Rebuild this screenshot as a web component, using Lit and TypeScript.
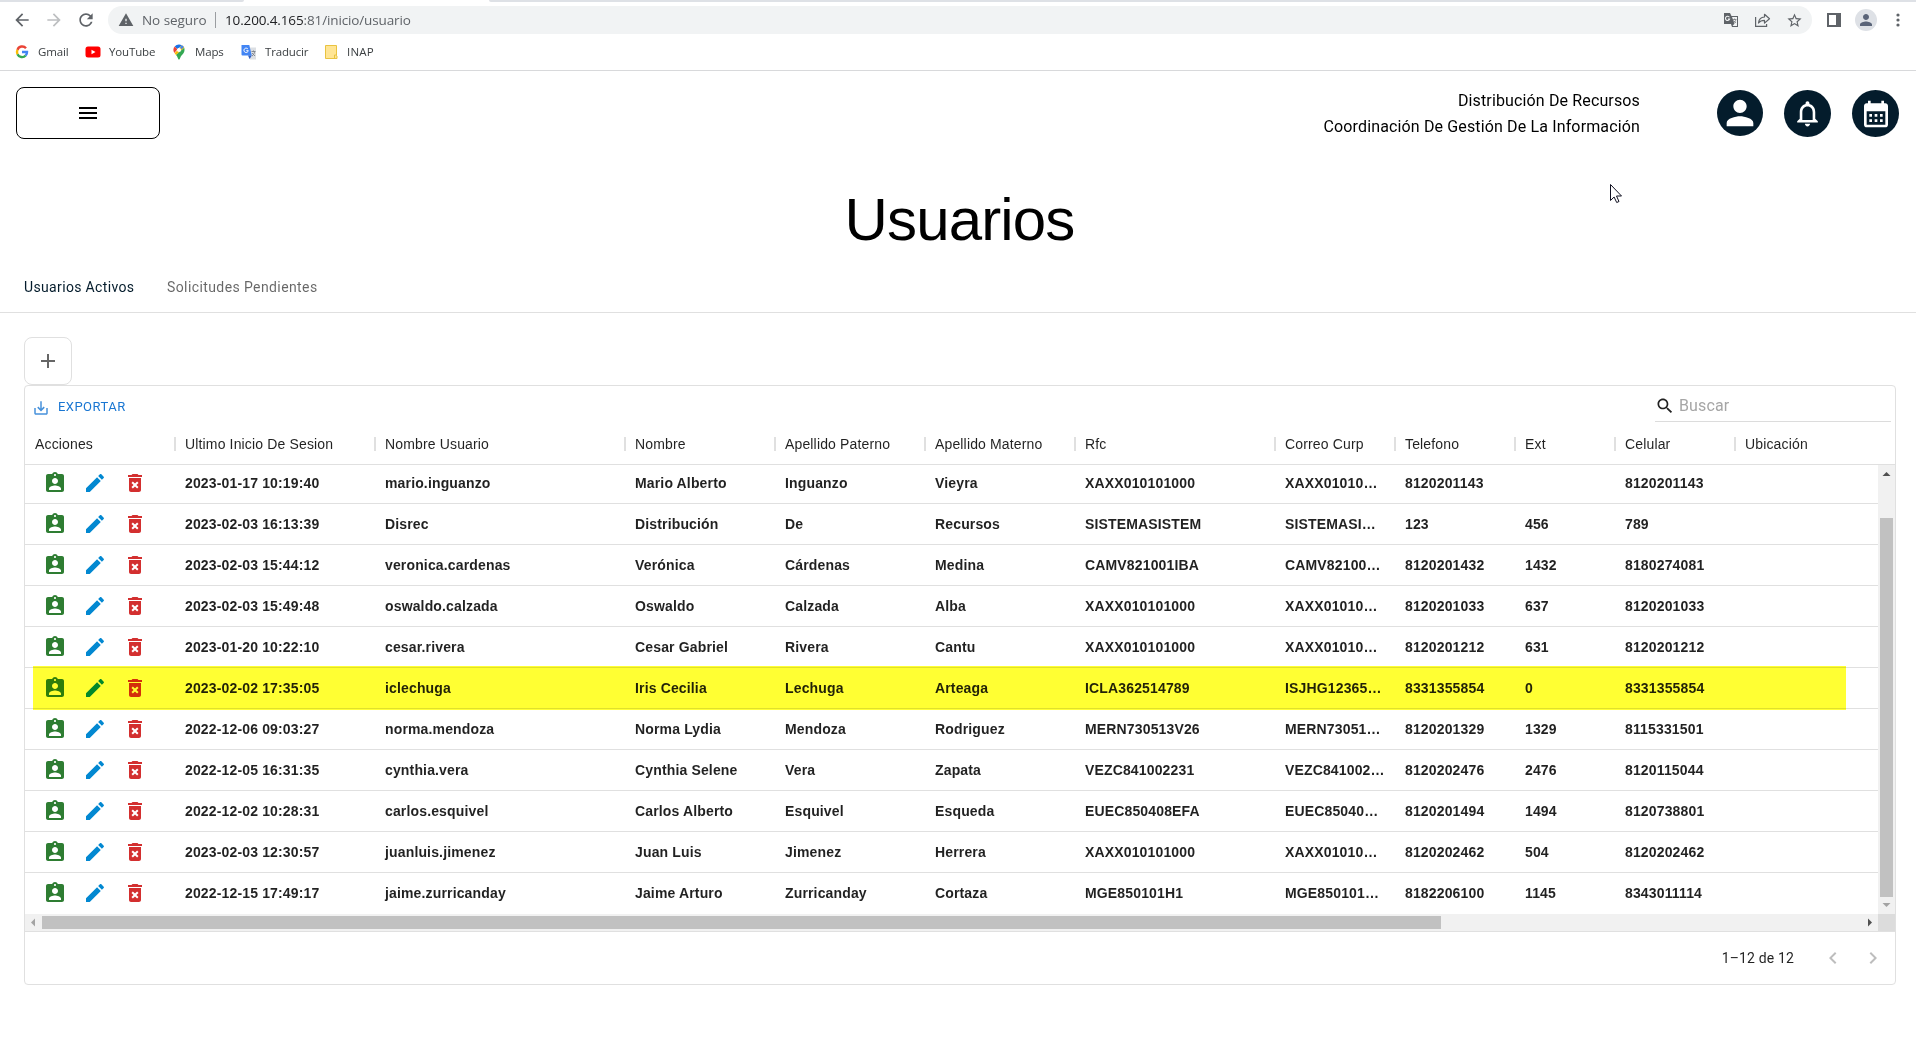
import { LitElement, html, svg, css, nothing } from "lit";
import { customElement } from "lit/decorators.js";

interface User {
  last: string;
  user: string;
  name: string;
  father: string;
  mother: string;
  rfc: string;
  curp: string;
  phone: string;
  ext: string;
  cell: string;
  marked?: boolean;
}

const row = (...v: string[]): User => ({
  last: v[0], user: v[1], name: v[2], father: v[3], mother: v[4],
  rfc: v[5], curp: v[6], phone: v[7], ext: v[8], cell: v[9],
});

const USERS: User[] = [
  row("2023-01-17 10:19:40", "mario.inguanzo", "Mario Alberto", "Inguanzo", "Vieyra", "XAXX010101000", "XAXX01010…", "8120201143", "", "8120201143"),
  row("2023-02-03 16:13:39", "Disrec", "Distribución", "De", "Recursos", "SISTEMASISTEM", "SISTEMASI…", "123", "456", "789"),
  row("2023-02-03 15:44:12", "veronica.cardenas", "Verónica", "Cárdenas", "Medina", "CAMV821001IBA", "CAMV82100…", "8120201432", "1432", "8180274081"),
  row("2023-02-03 15:49:48", "oswaldo.calzada", "Oswaldo", "Calzada", "Alba", "XAXX010101000", "XAXX01010…", "8120201033", "637", "8120201033"),
  row("2023-01-20 10:22:10", "cesar.rivera", "Cesar Gabriel", "Rivera", "Cantu", "XAXX010101000", "XAXX01010…", "8120201212", "631", "8120201212"),
  { ...row("2023-02-02 17:35:05", "iclechuga", "Iris Cecilia", "Lechuga", "Arteaga", "ICLA362514789", "ISJHG12365…", "8331355854", "0", "8331355854"), marked: true },
  row("2022-12-06 09:03:27", "norma.mendoza", "Norma Lydia", "Mendoza", "Rodriguez", "MERN730513V26", "MERN73051…", "8120201329", "1329", "8115331501"),
  row("2022-12-05 16:31:35", "cynthia.vera", "Cynthia Selene", "Vera", "Zapata", "VEZC841002231", "VEZC841002…", "8120202476", "2476", "8120115044"),
  row("2022-12-02 10:28:31", "carlos.esquivel", "Carlos Alberto", "Esquivel", "Esqueda", "EUEC850408EFA", "EUEC85040…", "8120201494", "1494", "8120738801"),
  row("2023-02-03 12:30:57", "juanluis.jimenez", "Juan Luis", "Jimenez", "Herrera", "XAXX010101000", "XAXX01010…", "8120202462", "504", "8120202462"),
  row("2022-12-15 17:49:17", "jaime.zurricanday", "Jaime Arturo", "Zurricanday", "Cortaza", "MGE850101H1", "MGE850101…", "8182206100", "1145", "8343011114"),
];

const HEADERS = [
  "Acciones", "Ultimo Inicio De Sesion", "Nombre Usuario", "Nombre", "Apellido Paterno",
  "Apellido Materno", "Rfc", "Correo Curp", "Telefono", "Ext", "Celular", "Ubicación",
];

const P = {
  back: "M20 11H7.83l5.59-5.59L12 4l-8 8 8 8 1.41-1.41L7.83 13H20v-2z",
  forward: "M12 4l-1.41 1.41L16.17 11H4v2h12.17l-5.58 5.59L12 20l8-8z",
  reload: "M17.65 6.35C16.2 4.9 14.21 4 12 4c-4.42 0-7.99 3.58-7.99 8s3.57 8 7.99 8c3.73 0 6.84-2.55 7.73-6h-2.08c-.82 2.33-3.04 4-5.65 4-3.31 0-6-2.69-6-6s2.69-6 6-6c1.66 0 3.14.69 4.22 1.78L13 11h7V4l-2.35 2.35z",
  warn: "M1 21h22L12 2 1 21zm12-3h-2v-2h2v2zm0-4h-2v-4h2v4z",
  star: "M22 9.24l-7.19-.62L12 2 9.19 8.63 2 9.24l5.46 4.73L5.82 21 12 17.27 18.18 21l-1.63-7.03L22 9.24zM12 15.4l-3.76 2.27 1-4.28-3.32-2.88 4.38-.38L12 6.1l1.71 4.04 4.38.38-3.32 2.88 1 4.28L12 15.4z",
  person: "M12 12c2.21 0 4-1.79 4-4s-1.79-4-4-4-4 1.79-4 4 1.79 4 4 4zm0 2c-2.67 0-8 1.34-8 4v2h16v-2c0-2.66-5.33-4-8-4z",
  menu: "M3 18h18v-2H3v2zm0-5h18v-2H3v2zm0-7v2h18V6H3z",
  bell: "M12 22c1.1 0 2-.9 2-2h-4c0 1.1.9 2 2 2zm6-6v-5c0-3.07-1.63-5.64-4.5-6.32V4c0-.83-.67-1.5-1.5-1.5s-1.5.67-1.5 1.5v.68C7.64 5.36 6 7.92 6 11v5l-2 2v1h16v-1l-2-2zm-2 1H8v-6c0-2.48 1.51-4.5 4-4.5s4 2.02 4 4.5v6z",
  calendar: "M19 4h-1V2h-2v2H8V2H6v2H5c-1.11 0-1.99.9-1.99 2L3 20c0 1.1.89 2 2 2h14c1.1 0 2-.9 2-2V6c0-1.1-.9-2-2-2zm0 16H5V10h14v10zM9 14H7v-2h2v2zm4 0h-2v-2h2v2zm4 0h-2v-2h2v2zm-8 4H7v-2h2v2zm4 0h-2v-2h2v2zm4 0h-2v-2h2v2z",
  plus: "M19 13h-6v6h-2v-6H5v-2h6V5h2v6h6v2z",
  save: "M19 12v7H5v-7H3v7c0 1.1.9 2 2 2h14c1.1 0 2-.9 2-2v-7h-2zm-6 .67l2.59-2.58L17 11.5l-5 5-5-5 1.41-1.41L11 12.67V3h2v9.67z",
  search: "M15.5 14h-.79l-.28-.27C15.41 12.59 16 11.11 16 9.5 16 5.91 13.09 3 9.5 3S3 5.91 3 9.5 5.91 16 9.5 16c1.61 0 3.09-.59 4.23-1.57l.27.28v.79l5 4.99L20.49 19l-4.99-5zm-6 0C7.01 14 5 11.99 5 9.5S7.01 5 9.5 5 14 7.01 14 9.5 11.99 14 9.5 14z",
  badge: "M19 3h-4.18C14.4 1.84 13.3 1 12 1c-1.3 0-2.4.84-2.82 2H5c-1.1 0-2 .9-2 2v14c0 1.1.9 2 2 2h14c1.1 0 2-.9 2-2V5c0-1.1-.9-2-2-2zm-7 0c.55 0 1 .45 1 1s-.45 1-1 1-1-.45-1-1 .45-1 1-1zm0 4c1.66 0 3 1.34 3 3s-1.34 3-3 3-3-1.34-3-3 1.34-3 3-3zm6 12H6v-1.4c0-2 4-3.1 6-3.1s6 1.1 6 3.1V19z",
  edit: "M3 17.25V21h3.75L17.81 9.94l-3.75-3.75L3 17.25zM20.71 7.04c.39-.39.39-1.02 0-1.41l-2.34-2.34c-.39-.39-1.02-.39-1.41 0l-1.83 1.83 3.75 3.75 1.83-1.83z",
  trash: "M6 19c0 1.1.9 2 2 2h8c1.1 0 2-.9 2-2V7H6v12zm2.46-7.12l1.41-1.41L12 12.59l2.12-2.12 1.41 1.41L13.41 14l2.12 2.12-1.41 1.41L12 15.41l-2.12 2.12-1.41-1.41L10.59 14l-2.13-2.12zM15.5 4l-1-1h-5l-1 1H5v2h14V4z",
  left: "M15.41 16.59L10.83 12l4.58-4.59L14 6l-6 6 6 6 1.41-1.41z",
  right: "M8.59 16.59L13.17 12 8.59 7.41 10 6l6 6-6 6-1.41-1.41z",
};

const icon = (d: string, size: number, cls = "") =>
  html`<svg class="ic ${cls}" width=${size} height=${size} viewBox="0 0 24 24">${svg`<path d=${d}></path>`}</svg>`;

@customElement("browser-bar")
export class BrowserBar extends LitElement {
  static styles = css`
    :host { display: block; height: 71px; box-sizing: border-box; border-bottom: 1px solid #d8d9db; background: #fff;
      font-family: "Open Sans", "Noto Sans", sans-serif; color: #3c4043; }
    .ic { display: block; fill: currentColor; flex: none; }
    .strip { height: 2px; display: flex; }
    .strip i { background: #dee1e6; height: 2px; }
    .s1 { width: 244px; border-bottom-right-radius: 2px; }
    .s2 { flex: 1; margin-left: 245px; border-bottom-left-radius: 2px; }
    .tools { display: flex; align-items: center; height: 36px; box-sizing: border-box; padding: 0 11px 0 12px; color: #5f6368; }
    .nav { display: flex; gap: 12px; width: 96px; }
    .off { color: #bdbfc1; }
    .omni { height: 28px; width: 1704px; box-sizing: border-box; border-radius: 14px; background: #f1f3f4; display: flex;
      align-items: center; padding: 0 9px 0 10px; font-size: 13.5px; white-space: nowrap; }
    .sec { width: 73px; margin-left: 8px; letter-spacing: -0.05px; }
    .bar { width: 1px; height: 16px; background: #9a9da1; margin-right: 9px; }
    .url { flex: 1; letter-spacing: -0.13px; }
    .url b { font-weight: 400; color: #202124; }
    .acts { display: flex; align-items: center; }
    .share { margin: 0 13px 0 12px; }
    .sq { display: block; }
    .panel { margin-left: 12px; }
    .ava { width: 22px; height: 22px; border-radius: 50%; background: #dee1e6; color: #5a6478; display: flex;
      align-items: center; justify-content: center; margin-left: 11px; }
    .dots { margin-left: auto; margin-right: 5px; }
    .marks { display: flex; height: 28px; align-items: center; padding-left: 14px; font-size: 11.5px; }
    .m { display: flex; align-items: center; white-space: nowrap; letter-spacing: -0.15px; }
    .m svg { flex: none; margin-right: 8px; }
    .m span { margin-top: -2px; }
    .m1 { width: 70px; }
    .m2 { width: 87px; }
    .m3 { width: 69px; }
    .m4 { width: 83px; }
    .m5 { letter-spacing: 0.2px; }
  `;

  render() {
    return html`
      <div class="strip"><i class="s1"></i><i class="s2"></i></div>
      <div class="tools">
        <div class="nav">${icon(P.back, 20)}${icon(P.forward, 20, "off")}${icon(P.reload, 20)}</div>
        <div class="omni">
          ${icon(P.warn, 16)}
          <span class="sec">No seguro</span><span class="bar"></span>
          <span class="url"><b>10.200.4.165</b>:81/inicio/usuario</span>
          <div class="acts">
            <svg class="sq" width="20" height="20" viewBox="0 0 20 20">
              <path d="M3 3h6l1.500 3H17v11h-6l-1-3H3z" fill="#5f6368"></path>
              <path d="M11 7h5v9h-4.500l2-2.500z" fill="#f1f3f4"></path>
              <path d="M8.400 7.300A2.100 2.100 0 1 0 8.600 9H6.800" fill="none" stroke="#f1f3f4" stroke-width="1.100"></path>
              <path d="M11.800 9.500h3.600M13.600 8.500v1M12.300 13c1.500-.800 2.300-2 2.500-3.500M12.500 10.500l2.400 2.500" fill="none" stroke="#777a7e" stroke-width=".8"></path>
            </svg>
            <svg class="sq share" width="20" height="20" viewBox="0 0 20 20" fill="none" stroke="#5f6368" stroke-width="1.2">
              <path d="M2.600 7v9.400h11V14"></path>
              <path d="M5.500 13c.4-4 3-5.800 6-6V4.300l5 4.400-5 4.400v-2.700c-2.600 0-4.500.6-6 2.600z" stroke-linejoin="round"></path>
            </svg>
            ${icon(P.star, 17)}
          </div>
        </div>
        <svg class="sq panel" width="20" height="20" viewBox="0 0 20 20"><path d="M3 3h14v14H3zM5 5v10h7V5z" fill="#5f6368" fill-rule="evenodd"></path></svg>
        <div class="ava">${icon(P.person, 18)}</div>
        <svg class="dots" width="4" height="16" viewBox="0 0 4 16" fill="#5f6368"><circle cx="2" cy="3" r="1.600"></circle><circle cx="2" cy="8" r="1.600"></circle><circle cx="2" cy="13" r="1.600"></circle></svg>
      </div>
      <div class="marks">
        <div class="m m1"><svg width="16" height="16" viewBox="0 0 16 16" fill="none" stroke-width="2.4">
          <path d="M12 4.200A5 5 0 0 0 3.500 5.800" stroke="#ea4335"></path><path d="M3.500 5.800a5 5 0 0 0 0 4.400" stroke="#fbbc05"></path>
          <path d="M3.500 10.200a5 5 0 0 0 8.200 1.300" stroke="#34a853"></path><path d="M11.700 11.500A5 5 0 0 0 13 8H8" stroke="#4285f4"></path></svg><span>Gmail</span></div>
        <div class="m m2"><svg width="17" height="16" viewBox="0 0 17 16"><rect x="1.500" y="2.500" width="15" height="11" rx="2.500" fill="#f00"></rect><path d="M7.500 5.700v4.600l4-2.300z" fill="#fff"></path></svg><span>YouTube</span></div>
        <div class="m m3"><svg width="16" height="16" viewBox="0 0 16 16">
          <path d="M8 .500a5.500 5.500 0 0 0-4.300 2l2.700 2.700L11 1.400A5.500 5.500 0 0 0 8 .500z" fill="#1a73e8"></path>
          <path d="M3.700 2.500A5.500 5.500 0 0 0 3.400 9l3-3.800z" fill="#ea4335"></path>
          <path d="M10.900 1.300L3.600 9.200 5 11l8.300-7.300a5.400 5.400 0 0 0-2.400-2.400z" fill="#fbbc04"></path>
          <path d="M13.200 3.700L5 10.900c2 2.100 2 4.600 3 4.600s1-2.500 3-4.600c1.700-1.900 2.500-3 2.500-5 0-.800 0-1.500-.3-2.200z" fill="#34a853"></path>
          <path d="M10.900 1.300L9.500 3l-.1 2 1.500-.200 2-1.700a5.400 5.400 0 0 0-2-1.800z" fill="#4285f4"></path>
          <circle cx="8" cy="5.900" r="2" fill="#fff"></circle></svg><span>Maps</span></div>
        <div class="m m4"><svg width="17" height="16" viewBox="0 0 17 16"><path d="M6 3.500h10v12h-6z" fill="#dcdfe3"></path>
          <path d="M1.500 1h7.800l2.500 10.500H2.500a1 1 0 0 1-1-1z" fill="#4285f4"></path><path d="M8 11.500h3.800l-2.200 3.500z" fill="#2f5fc4"></path>
          <path d="M7.900 5A2.200 2.200 0 1 0 8.300 6.700H6.300" stroke="#fff" fill="none"></path><path d="M11.500 7.500h4M13.500 6.500v1M12 12c1.600-1 2.400-2.500 2.600-4.500M12 9l3 3" stroke="#7a8089" fill="none" stroke-width=".9"></path></svg><span>Traducir</span></div>
        <div class="m m5"><svg width="16" height="16" viewBox="0 0 16 16"><path d="M2.500 1.500h11v10l.5.500v2.500h-11.500z" fill="#ffe594" stroke="#e9c340"></path><path d="M11.500 14v-3h2.500" fill="none" stroke="#e9c340"></path></svg><span>INAP</span></div>
      </div>`;
  }
}

@customElement("users-grid")
export class UsersGrid extends LitElement {
  static styles = css`
    :host { display: block; box-sizing: border-box; height: 600px; width: 1872px; border: 1px solid #e0e0e0; border-radius: 4px;
      font-family: "Liberation Sans", Arial, sans-serif; font-size: 14px; letter-spacing: 0.15px; color: rgba(0, 0, 0, 0.87); }
    .ic { display: block; fill: currentColor; flex: none; }
    .tool { height: 38px; display: flex; justify-content: space-between; padding: 0 4px 0 6px; font-family: Roboto, sans-serif; }
    .exp { display: flex; align-items: center; height: 40px; color: #1976d2; font-size: 13px; letter-spacing: 0.46px; gap: 8px; padding-left: 1px; }
    .exp svg { opacity: .8; margin-top: 4px; }
    .find { width: 236px; height: 36px; box-sizing: border-box; border-bottom: 1px solid #dcdcdc; display: flex; align-items: center;
      font-size: 16px; color: #a6a6a6; gap: 4px; padding-top: 4px; }
    .find svg { color: #212121; }
    .cols, .r { display: grid; grid-template-columns: 150px 200px 250px 150px 150px 150px 200px 120px 120px 100px 120px 1fr; align-items: center; }
    .cols { height: 41px; border-bottom: 1px solid #e0e0e0; box-sizing: border-box; }
    .h { padding-left: 10px; display: flex; align-items: center; justify-content: space-between; height: 20px; white-space: nowrap; }
    .h i { width: 2px; height: 14px; background: #e0e0e0; margin-right: -1px; }
    .view { display: grid; grid-template-columns: 1fr 17px; grid-template-rows: 449px 17px; }
    .rows { overflow: hidden; position: relative; }
    .rows .r:first-child { margin-top: -2px; }
    .r { height: 41px; box-sizing: border-box; border-bottom: 1px solid #e0e0e0; font-weight: 700; position: relative; }
    .r:last-child { border-bottom-color: transparent; }
    .c { padding-left: 10px; line-height: 20px; white-space: nowrap; }
    .a { display: flex; gap: 16px; padding-left: 18px; }
    .g { color: #2e7d32; }
    .b { color: #0288d1; }
    .d { color: #d32f2f; }
    .mark { position: absolute; left: 8px; top: -2px; width: 1813px; height: 44px; background: #ff3; mix-blend-mode: multiply; }
    .vs { background: #f1f1f1; display: flex; flex-direction: column; align-items: center; }
    .vs i { width: 13px; height: 379px; background: #c1c1c1; }
    .hs { background: #f1f1f1; display: flex; align-items: center; }
    .hs i { width: 1399px; height: 13px; background: #c1c1c1; }
    .hs .end { margin-left: auto; }
    .corner { background: #dcdcdc; }
    .arr { display: block; flex: none; fill: #505050; }
    .dim { fill: #a3a3a3; }
    .up { margin-bottom: 36px; }
    .foot { border-top: 1px solid #e0e0e0; height: 52px; display: flex; align-items: center; justify-content: flex-end;
      font-family: Roboto, sans-serif; gap: 16px; padding-right: 10px; }
    .count { margin-right: 11px; }
    .foot svg { color: rgba(0, 0, 0, 0.26); }
  `;

  render() {
    return html`
      <div class="tool">
        <div class="exp">${icon(P.save, 18)}<span>EXPORTAR</span></div>
        <div class="find">${icon(P.search, 20)}<span>Buscar</span></div>
      </div>
      <div class="cols">
        ${HEADERS.map((h, i) => html`<div class="h"><span>${h}</span>${i < HEADERS.length - 1 ? html`<i></i>` : nothing}</div>`)}
      </div>
      <div class="view">
        <div class="rows">
          ${USERS.map((u) => html`
            <div class="r">
              <div class="a">${icon(P.badge, 24, "g")}${icon(P.edit, 24, "b")}${icon(P.trash, 24, "d")}</div>
              ${[u.last, u.user, u.name, u.father, u.mother, u.rfc, u.curp, u.phone, u.ext, u.cell].map((t) => html`<div class="c">${t}</div>`)}
              ${u.marked ? html`<div class="mark"></div>` : nothing}
            </div>`)}
        </div>
        <div class="vs">
          <svg class="arr up" width="17" height="17"><path d="M4.500 11h8L8.500 7z"></path></svg><i></i>
          <svg class="arr dim" width="17" height="17"><path d="M4.500 6h8l-4 4z"></path></svg>
        </div>
        <div class="hs">
          <svg class="arr dim" width="17" height="17"><path d="M10 4.500v8l-4-4z"></path></svg><i></i>
          <svg class="arr end" width="17" height="17"><path d="M7 4.500v8l4-4z"></path></svg>
        </div>
        <div class="corner"></div>
      </div>
      <div class="foot"><span class="count">1–12 de 12</span>${icon(P.left, 24)}${icon(P.right, 24)}</div>`;
  }
}

@customElement("app-root")
export class AppRoot extends LitElement {
  static styles = css`
    :host { display: block; position: relative; width: 1916px; height: 1059px; overflow: hidden; background: #fff; color: #000;
      font-family: Roboto, sans-serif; }
    .ic { display: block; fill: currentColor; flex: none; }
    .top { display: flex; align-items: flex-start; padding: 16px 17px 0 16px; height: 92px; box-sizing: border-box; }
    .menu { width: 144px; height: 52px; box-sizing: border-box; border: 1px solid #000; border-radius: 8px; display: flex;
      align-items: center; justify-content: center; }
    .org { margin-left: auto; text-align: right; font-size: 16px; line-height: 26px; letter-spacing: 0.14px; margin-right: 77px; margin-top: 1px; }
    .round { width: 47px; height: 47px; border-radius: 50%; background: #041c2c; color: #fff; display: flex; align-items: center;
      justify-content: center; margin: 3px 0 0 21px; }
    .first { width: 46px; height: 46px; margin-left: 0; }
    .title { margin: 21px 0 0; text-align: center; font: 400 60px/72px "Liberation Sans", Arial, sans-serif; letter-spacing: -0.85px; padding-left: 3px; }
    .tabs { display: flex; height: 57px; box-sizing: border-box; border-bottom: 1px solid #e0e0e0; padding: 23px 24px 0;
      gap: 32px; font-size: 14px; letter-spacing: 0.4px; line-height: 16px; white-space: nowrap; }
    .tab { color: rgba(0, 0, 0, 0.6); }
    .on { color: #041c2c; width: 111px; letter-spacing: 0.35px; }
    .body { padding: 24px 0 0 24px; }
    .add { width: 48px; height: 48px; box-sizing: border-box; border: 1px solid #e0e0e0; border-radius: 8px; color: rgba(0, 0, 0, 0.6);
      display: flex; align-items: center; justify-content: center; }
    .cursor { position: absolute; left: 1609px; top: 183px; }
  `;

  render() {
    return html`
      <browser-bar></browser-bar>
      <div class="top">
        <div class="menu">${icon(P.menu, 24)}</div>
        <div class="org"><div>Distribución De Recursos</div><div>Coordinación De Gestión De La Información</div></div>
        <div class="round first">${icon(P.person, 40)}</div>
        <div class="round">${icon(P.bell, 31)}</div>
        <div class="round">${icon(P.calendar, 32)}</div>
      </div>
      <h1 class="title">Usuarios</h1>
      <div class="tabs"><span class="tab on">Usuarios Activos</span><span class="tab">Solicitudes Pendientes</span></div>
      <div class="body">
        <div class="add">${icon(P.plus, 24)}</div>
        <users-grid></users-grid>
      </div>
      <svg class="cursor" width="14" height="21" viewBox="0 0 14 21"><path d="M1.500 1.500v16l3.600-3.500 2.600 5.500 2.300-1-2.500-5.500h5z" fill="#fff" stroke="#101020" stroke-width="1"></path></svg>`;
  }
}
